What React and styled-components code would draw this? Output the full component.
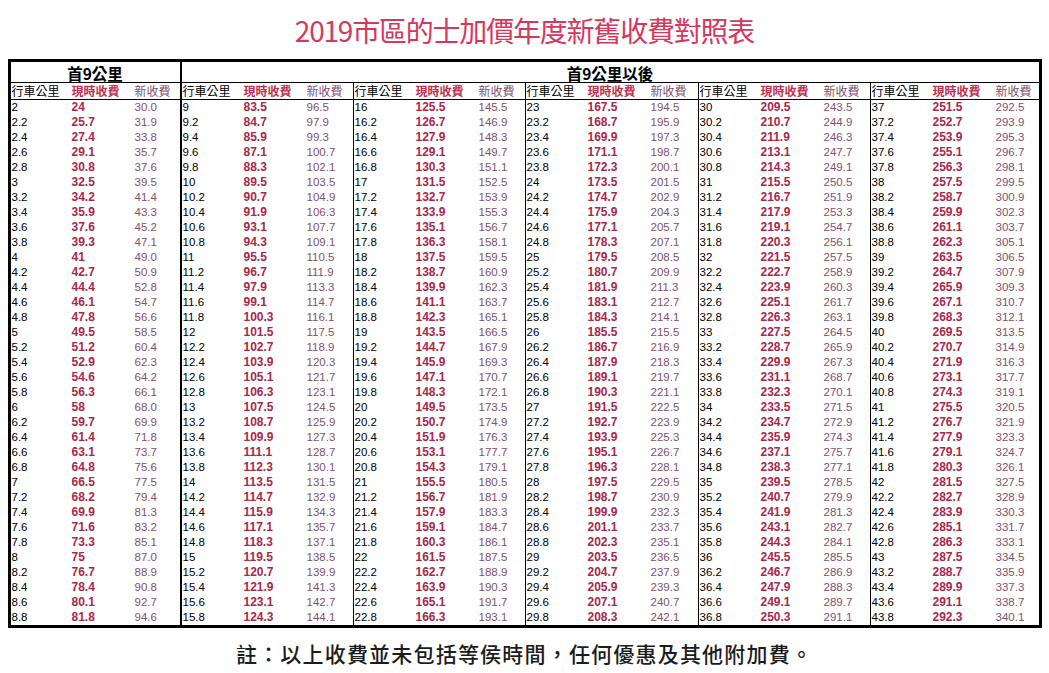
import styled, { createGlobalStyle } from "styled-components";

const GlobalStyle = createGlobalStyle`
  html, body {
    margin: 0;
    padding: 0;
    background: #fff;
  }
  body {
    font-family: "Liberation Sans", "Noto Sans CJK TC", sans-serif;
    color: #000;
  }
`;

const RED = "#aa274a";
const MAUVE = "#82506c";
const GROUP_WIDTHS = "169px 173px 172px 173px 172px 169px";

const round1 = (n) => Math.round(n * 10) / 10;
const trim = (n) => (Number.isInteger(round1(n)) ? String(round1(n)) : round1(n).toFixed(1));

// 35 rows x 6 groups, 0.2km per step starting at 2km
const rows = Array.from({ length: 35 }, (_, r) =>
  Array.from({ length: 6 }, (_, g) => {
    const step = g * 35 + r;
    const km = 2 + step * 0.2;
    const cur = step <= 35 ? 24 + step * 1.7 : 83.5 + (step - 35) * 1.2;
    const next = step <= 35 ? 30 + step * 1.9 : 96.5 + (step - 35) * 1.4;
    return { km: trim(km), cur: trim(cur), next: round1(next).toFixed(1) };
  })
);

const Page = styled.div`
  width: 1049px;
  display: flex;
  flex-direction: column;
  align-items: center;
`;

const Title = styled.h1`
  margin: 0;
  height: 59px;
  display: flex;
  align-items: center;
  justify-content: center;
  font-family: "Noto Sans CJK TC", "Noto Sans", sans-serif;
  font-weight: 400;
  font-size: 28px;
  letter-spacing: -1.2px;
  color: #d6385d;
  padding-top: 1px;
  box-sizing: border-box;
`;

const Board = styled.div`
  width: 1028px;
  border: 3px solid #000;
  background: #fff;
`;

const TopHead = styled.div`
  display: grid;
  grid-template-columns: 169px 1fr;
  height: 20px;
  border-bottom: 1px solid #000;
`;

const TopCell = styled.div`
  display: flex;
  align-items: center;
  justify-content: center;
  overflow: hidden;
  font-family: "Noto Sans CJK TC", sans-serif;
  font-weight: 700;
  font-size: 15.5px;
  line-height: 18px;
  padding-top: 1px;
  border-left: ${(p) => (p.$divide ? "2px solid #000" : "none")};
`;

const Row = styled.div`
  display: grid;
  grid-template-columns: ${GROUP_WIDTHS};
  height: ${(p) => (p.$head ? "16px" : "15px")};
  border-bottom: ${(p) => (p.$head ? "1px solid #000" : "none")};
`;

const Group = styled.div`
  display: grid;
  grid-template-columns: ${(p) => (p.$index === 0 ? "60px 63px 1fr" : "61px 63px 1fr")};
  align-items: center;
  border-left: ${(p) => (p.$index === 0 ? "none" : p.$index === 1 ? "2px solid #000" : "1px solid #000")};
`;

const Cell = styled.span`
  padding-left: 1px;
  white-space: nowrap;
  font-size: ${(p) => (p.$kind === "cur" ? "12px" : "11.5px")};
  font-weight: ${(p) => (p.$kind === "cur" ? 700 : 400)};
  color: ${(p) => (p.$kind === "cur" ? RED : p.$kind === "next" ? MAUVE : "#000")};
  line-height: 15px;
`;

const Label = styled.span`
  padding-left: 1px;
  white-space: nowrap;
  font-family: "Noto Sans CJK TC", sans-serif;
  font-size: 12px;
  line-height: 16px;
  font-weight: ${(p) => (p.$kind === "cur" ? 700 : 400)};
  color: ${(p) => (p.$kind === "cur" ? "#c0304f" : p.$kind === "next" ? MAUVE : "#000")};
`;

const Note = styled.p`
  margin: 0;
  height: 50px;
  display: flex;
  align-items: center;
  justify-content: center;
  font-family: "Noto Sans CJK TC", sans-serif;
  font-size: 21px;
  font-weight: 500;
  letter-spacing: 1.2px;
  color: #1c1c1c;
`;

export default function App() {
  return (
    <Page>
      <GlobalStyle />
      <Title>2019市區的士加價年度新舊收費對照表</Title>
      <Board>
        <TopHead>
          <TopCell>首9公里</TopCell>
          <TopCell $divide>首9公里以後</TopCell>
        </TopHead>
        <Row $head>
          {Array.from({ length: 6 }, (_, g) => (
            <Group key={g} $index={g}>
              <Label>行車公里</Label>
              <Label $kind="cur">現時收費</Label>
              <Label $kind="next">新收費</Label>
            </Group>
          ))}
        </Row>
        {rows.map((row, r) => (
          <Row key={r}>
            {row.map((c, g) => (
              <Group key={g} $index={g}>
                <Cell>{c.km}</Cell>
                <Cell $kind="cur">{c.cur}</Cell>
                <Cell $kind="next">{c.next}</Cell>
              </Group>
            ))}
          </Row>
        ))}
      </Board>
      <Note>註：以上收費並未包括等侯時間，任何優惠及其他附加費。</Note>
    </Page>
  );
}
